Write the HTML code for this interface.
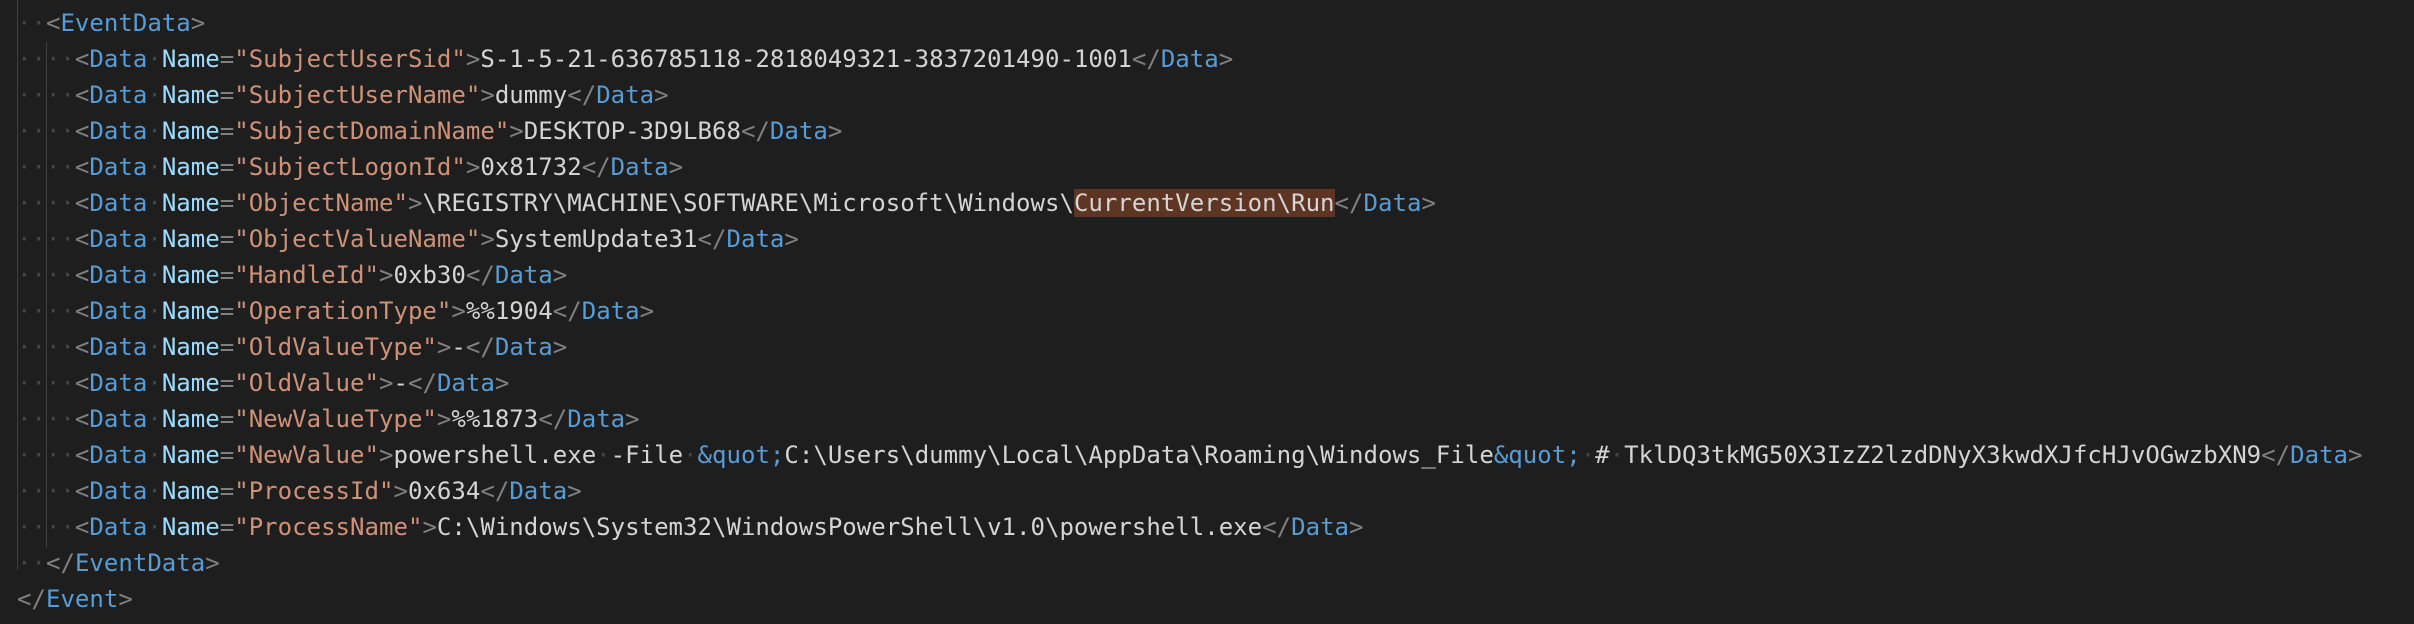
<!DOCTYPE html>
<html><head><meta charset="utf-8"><style>
html,body{margin:0;padding:0;background:#1e1e1e;width:2414px;height:624px;overflow:hidden;position:relative}
.l{position:absolute;left:17px;height:36px;line-height:36px;font-family:"DejaVu Sans Mono","Liberation Mono",monospace;font-size:24.05px;color:#d4d4d4;white-space:pre}
.p{color:#808080}.t{color:#569cd6}.a{color:#9cdcfe}.s{color:#ce9178}.w{color:#444}.h{background:#5e3522}
.g{position:absolute;width:1px;background:#404040}
</style></head><body>
<div class="g" style="left:17px;top:0;height:570px"></div>
<div class="g" style="left:46px;top:42px;height:506px"></div>
<div class="l" style="top:-31px"><span class="w">··</span><span class="p">&lt;/</span><span class="t">System</span><span class="p">&gt;</span></div>
<div class="l" style="top:5px"><span class="w">··</span><span class="p">&lt;</span><span class="t">EventData</span><span class="p">&gt;</span></div>
<div class="l" style="top:41px"><span class="w">····</span><span class="p">&lt;</span><span class="t">Data</span><span class="w">·</span><span class="a">Name</span><span class="p">=</span><span class="s">"SubjectUserSid"</span><span class="p">&gt;</span>S-1-5-21-636785118-2818049321-3837201490-1001<span class="p">&lt;/</span><span class="t">Data</span><span class="p">&gt;</span></div>
<div class="l" style="top:77px"><span class="w">····</span><span class="p">&lt;</span><span class="t">Data</span><span class="w">·</span><span class="a">Name</span><span class="p">=</span><span class="s">"SubjectUserName"</span><span class="p">&gt;</span>dummy<span class="p">&lt;/</span><span class="t">Data</span><span class="p">&gt;</span></div>
<div class="l" style="top:113px"><span class="w">····</span><span class="p">&lt;</span><span class="t">Data</span><span class="w">·</span><span class="a">Name</span><span class="p">=</span><span class="s">"SubjectDomainName"</span><span class="p">&gt;</span>DESKTOP-3D9LB68<span class="p">&lt;/</span><span class="t">Data</span><span class="p">&gt;</span></div>
<div class="l" style="top:149px"><span class="w">····</span><span class="p">&lt;</span><span class="t">Data</span><span class="w">·</span><span class="a">Name</span><span class="p">=</span><span class="s">"SubjectLogonId"</span><span class="p">&gt;</span>0x81732<span class="p">&lt;/</span><span class="t">Data</span><span class="p">&gt;</span></div>
<div class="l" style="top:185px"><span class="w">····</span><span class="p">&lt;</span><span class="t">Data</span><span class="w">·</span><span class="a">Name</span><span class="p">=</span><span class="s">"ObjectName"</span><span class="p">&gt;</span>\REGISTRY\MACHINE\SOFTWARE\Microsoft\Windows\<span class="h">CurrentVersion\Run</span><span class="p">&lt;/</span><span class="t">Data</span><span class="p">&gt;</span></div>
<div class="l" style="top:221px"><span class="w">····</span><span class="p">&lt;</span><span class="t">Data</span><span class="w">·</span><span class="a">Name</span><span class="p">=</span><span class="s">"ObjectValueName"</span><span class="p">&gt;</span>SystemUpdate31<span class="p">&lt;/</span><span class="t">Data</span><span class="p">&gt;</span></div>
<div class="l" style="top:257px"><span class="w">····</span><span class="p">&lt;</span><span class="t">Data</span><span class="w">·</span><span class="a">Name</span><span class="p">=</span><span class="s">"HandleId"</span><span class="p">&gt;</span>0xb30<span class="p">&lt;/</span><span class="t">Data</span><span class="p">&gt;</span></div>
<div class="l" style="top:293px"><span class="w">····</span><span class="p">&lt;</span><span class="t">Data</span><span class="w">·</span><span class="a">Name</span><span class="p">=</span><span class="s">"OperationType"</span><span class="p">&gt;</span>%%1904<span class="p">&lt;/</span><span class="t">Data</span><span class="p">&gt;</span></div>
<div class="l" style="top:329px"><span class="w">····</span><span class="p">&lt;</span><span class="t">Data</span><span class="w">·</span><span class="a">Name</span><span class="p">=</span><span class="s">"OldValueType"</span><span class="p">&gt;</span>-<span class="p">&lt;/</span><span class="t">Data</span><span class="p">&gt;</span></div>
<div class="l" style="top:365px"><span class="w">····</span><span class="p">&lt;</span><span class="t">Data</span><span class="w">·</span><span class="a">Name</span><span class="p">=</span><span class="s">"OldValue"</span><span class="p">&gt;</span>-<span class="p">&lt;/</span><span class="t">Data</span><span class="p">&gt;</span></div>
<div class="l" style="top:401px"><span class="w">····</span><span class="p">&lt;</span><span class="t">Data</span><span class="w">·</span><span class="a">Name</span><span class="p">=</span><span class="s">"NewValueType"</span><span class="p">&gt;</span>%%1873<span class="p">&lt;/</span><span class="t">Data</span><span class="p">&gt;</span></div>
<div class="l" style="top:437px"><span class="w">····</span><span class="p">&lt;</span><span class="t">Data</span><span class="w">·</span><span class="a">Name</span><span class="p">=</span><span class="s">"NewValue"</span><span class="p">&gt;</span>powershell.exe<span class="w">·</span>-File<span class="w">·</span><span class="t">&amp;quot;</span>C:\Users\dummy\Local\AppData\Roaming\Windows_File<span class="t">&amp;quot;</span><span class="w">·</span>#<span class="w">·</span>TklDQ3tkMG50X3IzZ2lzdDNyX3kwdXJfcHJvOGwzbXN9<span class="p">&lt;/</span><span class="t">Data</span><span class="p">&gt;</span></div>
<div class="l" style="top:473px"><span class="w">····</span><span class="p">&lt;</span><span class="t">Data</span><span class="w">·</span><span class="a">Name</span><span class="p">=</span><span class="s">"ProcessId"</span><span class="p">&gt;</span>0x634<span class="p">&lt;/</span><span class="t">Data</span><span class="p">&gt;</span></div>
<div class="l" style="top:509px"><span class="w">····</span><span class="p">&lt;</span><span class="t">Data</span><span class="w">·</span><span class="a">Name</span><span class="p">=</span><span class="s">"ProcessName"</span><span class="p">&gt;</span>C:\Windows\System32\WindowsPowerShell\v1.0\powershell.exe<span class="p">&lt;/</span><span class="t">Data</span><span class="p">&gt;</span></div>
<div class="l" style="top:545px"><span class="w">··</span><span class="p">&lt;/</span><span class="t">EventData</span><span class="p">&gt;</span></div>
<div class="l" style="top:581px"><span class="p">&lt;/</span><span class="t">Event</span><span class="p">&gt;</span></div>
</body></html>
